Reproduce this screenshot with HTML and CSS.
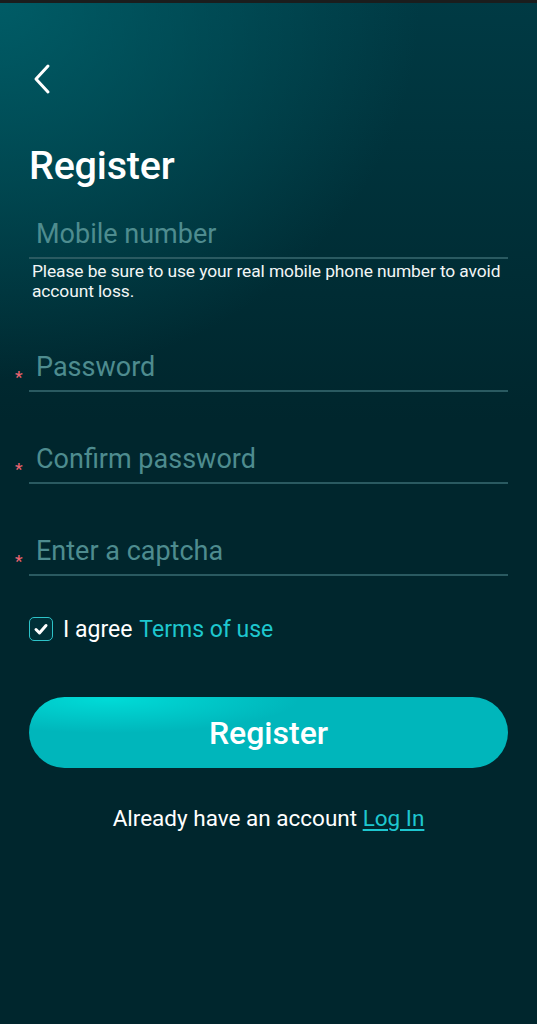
FILE: index.html
```html
<!DOCTYPE html>
<html>
<head>
<meta charset="utf-8">
<title>Register</title>
<link rel="stylesheet" href="styles.css">
</head>
<body>
<div class="statusbar"></div>
<div class="page">
	<div class="backrow">
		<svg class="backicon" width="20" height="32" viewBox="0 0 20 32">
			<path d="M16 3 L4 16 L16 29" fill="none" stroke="#ffffff" stroke-width="3" stroke-linecap="round" stroke-linejoin="round"/>
		</svg>
	</div>

	<h1 class="title">Register</h1>

	<div class="field field_first">
		<div class="inputline"><span class="placeholder">Mobile number</span></div>
	</div>
	<p class="hint">Please be sure to use your real mobile phone number to avoid account loss.</p>

	<div class="field">
		<span class="star">*</span>
		<div class="inputline"><span class="placeholder">Password</span></div>
	</div>

	<div class="field">
		<span class="star">*</span>
		<div class="inputline"><span class="placeholder">Confirm password</span></div>
	</div>

	<div class="field">
		<span class="star">*</span>
		<div class="inputline"><span class="placeholder">Enter a captcha</span></div>
	</div>

	<div class="agree">
		<span class="checkbox">
			<svg width="16" height="16" viewBox="0 0 16 16">
				<path d="M3 8.5 L6.5 12 L13 4.5" fill="none" stroke="#ffffff" stroke-width="3" stroke-linecap="round" stroke-linejoin="round"/>
			</svg>
		</span>
		<span class="agreetext">I agree</span>
		<span class="termslink">Terms of use</span>
	</div>

	<div class="registerbtn">Register</div>

	<p class="loginrow">Already have an account <span class="loginlink">Log In</span></p>
</div>
</body>
</html>
```

FILE: styles.css
```css
html, body { margin: 0; padding: 0; }
body {
	width: 537px;
	height: 1024px;
	overflow: hidden;
	font-family: Roboto, "Liberation Sans", sans-serif;
	color: #ffffff;
	background-color: #00262d;
	background-image:
		radial-gradient(ellipse 420px 380px at 0px 0px, rgba(0, 98, 108, 0.85), rgba(0, 98, 108, 0) 100%),
		linear-gradient(180deg, #003a44 0px, #00262d 420px);
}
.statusbar { height: 3px; background-color: #1b1d1d; }

.page { padding: 0 29px; display: flex; flex-direction: column; }

.backrow { padding-top: 60px; padding-left: 3px; height: 32px; }
.backicon { display: block; }

.title {
	margin: 49px 0 0 0;
	font-size: 39.5px;
	font-weight: 500;
	line-height: 44px;
	letter-spacing: -0.2px;
}

.field { position: relative; margin-top: 49px; }
.field_first { margin-top: 28px; }
.inputline {
	height: 35px;
	padding-bottom: 6px;
	border-bottom: 2px solid #2a5a61;
	padding-left: 7px;
	display: flex;
	align-items: center;
}
.placeholder { font-size: 27px; color: #4e8c8f; line-height: 30px; }
.star {
	position: absolute;
	left: -14px;
	top: 18px;
	color: #eb6370;
	font-size: 17px;
	font-weight: 500;
}

.hint {
	margin: 2px 0 -1px 3px;
	font-size: 17.4px;
	line-height: 20px;
	color: #f2f6f6;
	letter-spacing: -0.1px;
}

.agree { display: flex; align-items: center; margin-top: 40px; height: 26px; }
.checkbox {
	width: 22px;
	height: 22px;
	border: 1.5px solid #2ec3c8;
	border-radius: 5px;
	display: flex;
	align-items: center;
	justify-content: center;
	background-color: #003038;
}
.agreetext { margin-left: 10px; font-size: 23px; color: #ffffff; }
.termslink { margin-left: 7px; font-size: 23px; color: #1ec7cf; }

.registerbtn {
	margin-top: 55px;
	height: 71px;
	border-radius: 36px;
	background-color: #00b6bb;
	background-image:
		radial-gradient(ellipse 190px 34px at 80px 2px, rgba(0, 228, 222, 0.8), rgba(0, 228, 222, 0) 100%);
	display: flex;
	align-items: center;
	justify-content: center;
	font-size: 32px;
	font-weight: 500;
	color: #ffffff;
}

.loginrow {
	margin: 37px 0 0 0;
	text-align: center;
	font-size: 22.5px;
	color: #ffffff;
}
.loginlink { color: #1ec7cf; text-decoration: underline; text-underline-offset: 3px; }
```
